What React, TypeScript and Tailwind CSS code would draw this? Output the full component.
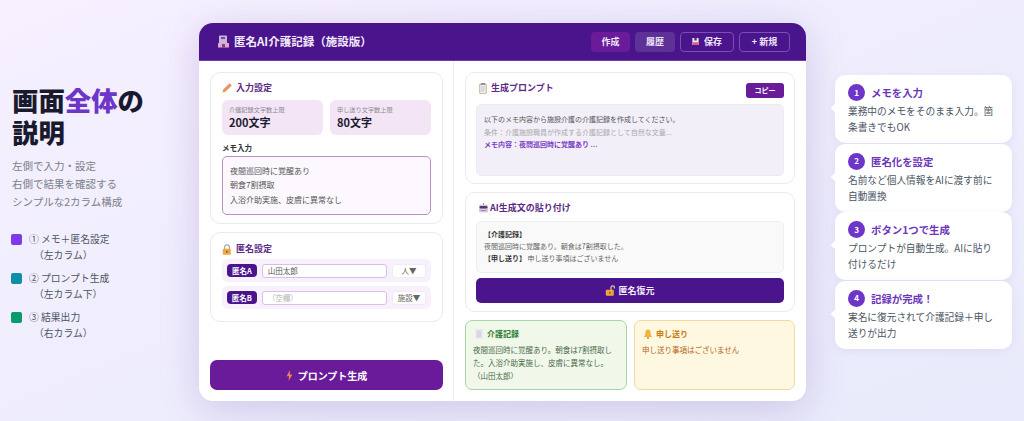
import type { ReactNode } from "react";

const font = { fontFamily: '"Noto Sans CJK JP", "Noto Sans", sans-serif' };

function Building() {
  return (
    <svg width="11" height="13" viewBox="0 0 11 13" className="shrink-0">
      <rect x="1" y="0.5" width="8" height="9" rx="1" fill="#c9b6dc" />
      <rect x="3" y="2" width="4" height="2" fill="#6d4a9a" />
      <rect x="0" y="8" width="11" height="4.5" rx="0.5" fill="#e6a8c8" />
      <rect x="4" y="9" width="3" height="3.5" fill="#7a3f96" />
    </svg>
  );
}

function Pencil() {
  return (
    <svg width="10" height="10" viewBox="0 0 10 10" className="shrink-0">
      <path d="M0.5 9.5 L1.2 6.6 L6.8 1 L9 3.2 L3.4 8.8 Z" fill="#e8955a" />
      <path d="M6.8 1 L7.6 0.4 L9.6 2.4 L9 3.2 Z" fill="#d66a5a" />
    </svg>
  );
}

function Lock({ open }: { open?: boolean }) {
  return (
    <svg width="10" height="11" viewBox="0 0 10 11" className="shrink-0">
      {open ? (
        <path d="M6 5 V2.6 A1.7 1.7 0 0 1 9.4 2.6 V3.6" fill="none" stroke="#e9c9a0" strokeWidth="1.2" />
      ) : (
        <path d="M2.6 5 V3.2 A2.4 2.4 0 0 1 7.4 3.2 V5" fill="none" stroke="#a8a8b0" strokeWidth="1.2" />
      )}
      <rect x="0.8" y="4.8" width="8" height="6" rx="1" fill="#efa73c" />
      <rect x="4.2" y="6.8" width="1.4" height="2" fill="#8a5a1c" />
    </svg>
  );
}

function Clipboard() {
  return (
    <svg width="8" height="11" viewBox="0 0 8 11" className="ml-[3px] shrink-0">
      <rect x="0.3" y="0.8" width="7.4" height="10" rx="0.8" fill="#c2a68a" />
      <rect x="1.2" y="1.8" width="5.6" height="8.2" fill="#eeeef2" />
      <rect x="2" y="0" width="4" height="1.8" fill="#8d8d96" />
      <path d="M2 4 H6 M2 6 H6 M2 8 H5" stroke="#a8a8b4" strokeWidth="0.6" />
    </svg>
  );
}

function Robot() {
  return (
    <svg width="11" height="10" viewBox="0 0 11 10" className="mr-[-3px] ml-[2px] shrink-0">
      <rect x="5" y="0" width="1" height="2" fill="#8d7a9c" />
      <rect x="1" y="1.5" width="9" height="8" rx="1.5" fill="#d9c8dc" />
      <rect x="1.6" y="3" width="7.8" height="2.6" rx="1" fill="#4d3a66" />
      <rect x="3" y="7" width="5" height="1" fill="#a884a8" />
    </svg>
  );
}

function Doc() {
  return (
    <svg width="8" height="10" viewBox="0 0 8 10" className="shrink-0">
      <rect x="0.5" y="0.3" width="7" height="9.4" fill="#e4e2f0" />
      <path d="M2 3 H6 M2 5 H6 M2 7 H6" stroke="#b9b6d0" strokeWidth="0.6" />
    </svg>
  );
}

function Bell() {
  return (
    <svg width="10" height="10" viewBox="0 0 10 10" className="shrink-0">
      <path d="M5 0.5 C3 0.5 2.4 2.2 2.4 4 C2.4 6 1.4 7 0.6 8 H9.4 C8.6 7 7.6 6 7.6 4 C7.6 2.2 7 0.5 5 0.5 Z" fill="#f2b53c" />
      <circle cx="5" cy="9" r="1" fill="#c98a2a" />
    </svg>
  );
}

function Bolt() {
  return (
    <svg width="7" height="11" viewBox="0 0 7 11" className="shrink-0">
      <path d="M4 0 L0.6 6.2 H3 L2.6 11 L6.4 4.6 H3.8 Z" fill="#f0815a" />
    </svg>
  );
}

function Floppy() {
  return (
    <svg width="7" height="9" viewBox="0 0 9 10" className="shrink-0">
      <rect x="0.5" y="0.5" width="8" height="9" fill="#ece6f2" />
      <rect x="3" y="0.5" width="3" height="3.2" fill="#4a3a66" />
      <rect x="1" y="6" width="7" height="3.5" fill="#e2587e" />
    </svg>
  );
}

function Card({ className, children }: { className: string; children: ReactNode }) {
  return <div className={`rounded-[10px] border border-[#ebe8f0] bg-white ${className}`}>{children}</div>;
}

function CardTitle({ icon, children }: { icon: ReactNode; children: ReactNode }) {
  return (
    <div className="flex items-center gap-[4px] text-[9px] leading-[14px] font-bold text-[#5b2a86]">
      {icon}
      <span>{children}</span>
    </div>
  );
}

function Legend({ color, line1, line2 }: { color: string; line1: string; line2: string }) {
  return (
    <div className="flex gap-[7px]">
      <div className={`mt-[3px] h-[11px] w-[11px] shrink-0 rounded-[2px] ${color}`} />
      <div className="text-[9.8px] leading-[16px] text-[#4b5563]">
        <div>{line1}</div>
        <div className="pl-[5px]">{line2}</div>
      </div>
    </div>
  );
}

function Limit({ label, value }: { label: string; value: string }) {
  return (
    <div className="h-[35px] flex-1 rounded-[6px] bg-[#f3e5f5] px-[7px] pt-[5px]">
      <div className="text-[6.2px] leading-[9px] text-[#8b8b95]">{label}</div>
      <div className="text-[11px] leading-[16px] font-bold text-[#1a1a2e]">{value}</div>
    </div>
  );
}

function AnonRow({ tag, value, empty, kind }: { tag: string; value: string; empty?: boolean; kind: string }) {
  return (
    <div className="flex h-[23px] items-center rounded-[6px] bg-[#f9f0fd] pr-[5px] pl-[5px]">
      <div className="flex h-[13px] w-[30px] items-center justify-center rounded-[4px] bg-[#4a148c] text-[7.5px] font-bold text-white">
        {tag}
      </div>
      <div
        className={`ml-[5px] flex h-[14px] w-[126px] items-center rounded-[3px] border-[1.5px] border-[#d9bfe2] bg-white pl-[5px] text-[7.5px] ${
          empty ? "text-[#b5b5bd]" : "text-[#555]"
        }`}
      >
        {value}
      </div>
      <div className="ml-[5px] flex h-[14px] w-[34px] items-center justify-center rounded-[3px] border border-[#f0ebf4] bg-white text-[7.5px] text-[#666]">
        {kind}
      </div>
    </div>
  );
}

function Step({ num, title, body }: { num: number; title: string; body: string }) {
  return (
    <div className="relative h-[68px] rounded-[10px] bg-white pt-[9px] pr-[12px] pl-[13px] shadow-[0_2px_10px_rgba(90,60,170,0.08)]">
      <div className="absolute top-[30px] left-[-3px] h-[6px] w-[6px] rotate-45 bg-white" />
      <div className="flex items-center gap-[6px]">
        <div className="flex h-[17px] w-[17px] items-center justify-center rounded-full bg-[#6d36c9] text-[8px] font-bold text-white">
          {num}
        </div>
        <span className="text-[10.4px] leading-[17px] font-bold text-[#6d36b9]">{title}</span>
      </div>
      <div className="mt-[2px] text-[9.7px] leading-[16px] text-[#4b5563]">{body}</div>
    </div>
  );
}

export default function App() {
  return (
    <div
      className="flex h-[421px] w-[1024px] overflow-hidden bg-gradient-to-br from-[#f6f0ff] to-[#e8ebfb]"
      style={font}
    >
      <div className="w-[199px] shrink-0 pt-[84px] pl-[11px]">
        <h1 className="pl-[1px] text-[26.4px] leading-[32px] font-black text-[#1a1a2e]">
          画面<span className="text-[#6d36c9]">全体</span>の<br />説明
        </h1>
        <div className="mt-[9px] pl-[1px] text-[10.5px] leading-[18px] text-[#7a7f8a]">
          <div>左側で入力・設定</div>
          <div>右側で結果を確認する</div>
          <div>シンプルな2カラム構成</div>
        </div>
        <div className="mt-[20px] flex flex-col gap-[7px]">
          <Legend color="bg-[#7c3aed]" line1="① メモ＋匿名設定" line2="（左カラム）" />
          <Legend color="bg-[#0e8fa8]" line1="② プロンプト生成" line2="（左カラム下）" />
          <Legend color="bg-[#0a9a6c]" line1="③ 結果出力" line2="（右カラム）" />
        </div>
      </div>

      <div className="mt-[23px] flex h-[378px] w-[607px] shrink-0 flex-col overflow-hidden rounded-[14px] bg-white shadow-[0_8px_40px_rgba(74,20,140,0.18)]">
        <div className="flex h-[38px] shrink-0 items-center border-b border-[#6f3aa8] bg-[#4a148c] pr-[16px] pl-[19px]">
          <Building />
          <span className="ml-[5px] text-[11.5px] font-bold text-[#f3eafa]">匿名AI介護記録（施設版）</span>
          <div className="ml-auto flex items-center gap-[5px] text-[9px] font-bold text-[#f0e6f8]">
            <div className="flex h-[20px] w-[39px] items-center justify-center rounded-[4px] bg-[#6a1b9a]">作成</div>
            <div className="flex h-[20px] w-[40px] items-center justify-center rounded-[4px] bg-[#5e3197]">履歴</div>
            <div className="flex h-[20px] w-[54px] items-center justify-center gap-[5px] rounded-[4px] border border-[#7a4fb0]">
              <Floppy />
              保存
            </div>
            <div className="flex h-[20px] w-[51px] items-center justify-center rounded-[4px] border border-[#7a4fb0]">+ 新規</div>
          </div>
        </div>

        <div className="flex min-h-0 flex-1">
          <div className="flex w-[255px] shrink-0 flex-col border-r border-[#efeaf4] pt-[11px] pr-[10px] pb-[11px] pl-[11px]">
            <Card className="h-[152px] px-[11px] pt-[8px]">
              <CardTitle icon={<Pencil />}>入力設定</CardTitle>
              <div className="mt-[5px] flex gap-[7px]">
                <Limit label="介護記録文字数上限" value="200文字" />
                <Limit label="申し送り文字数上限" value="80文字" />
              </div>
              <div className="mt-[7px] text-[7.5px] leading-[11px] font-bold text-[#333]">メモ入力</div>
              <div className="mt-[3px] h-[59px] rounded-[5px] border-[1.5px] border-[#b990c4] bg-[#fdf8ff] px-[7px] pt-[6.5px] text-[8px] leading-[14.5px] text-[#555]">
                <div>夜間巡回時に覚醒あり</div>
                <div>朝食7割摂取</div>
                <div>入浴介助実施、皮膚に異常なし</div>
              </div>
            </Card>
            <Card className="mt-[8px] h-[90px] px-[11px] pt-[9px]">
              <CardTitle icon={<Lock />}>匿名設定</CardTitle>
              <div className="mt-[3px] flex flex-col gap-[4px]">
                <AnonRow tag="匿名A" value="山田太郎" kind="人▼" />
                <AnonRow tag="匿名B" value="（空欄）" empty kind="施設▼" />
              </div>
            </Card>
            <div className="mt-auto flex h-[30px] items-center justify-center gap-[5px] rounded-[7px] bg-[#6a1b9a] text-[10px] font-bold text-white">
              <Bolt />
              プロンプト生成
            </div>
          </div>

          <div className="flex min-w-0 flex-1 flex-col pt-[11px] pr-[11px] pb-[11px] pl-[11px]">
            <Card className="h-[112px] px-[10px] pt-[8px]">
              <div className="flex items-start justify-between">
                <CardTitle icon={<Clipboard />}>生成プロンプト</CardTitle>
                <div className="mt-[2px] flex h-[15px] w-[38px] items-center justify-center rounded-[3px] bg-[#6a1b9a] text-[7px] font-bold text-white">
                  コピー
                </div>
              </div>
              <div className="mt-[6px] h-[72px] rounded-[5px] border border-[#eeeaf4] bg-[#f3eff9] px-[7px] pt-[8px] text-[7px] leading-[12.5px]">
                <div className="text-[#555]">以下のメモ内容から施設介護の介護記録を作成してください。</div>
                <div className="text-[#aaa]">条件：介護施設職員が作成する介護記録として自然な文章...</div>
                <div className="font-bold text-[#7b3fc4]">メモ内容：夜間巡回時に覚醒あり ...</div>
              </div>
            </Card>
            <Card className="mt-[8px] h-[120px] px-[10px] pt-[8px]">
              <CardTitle icon={<Robot />}>AI生成文の貼り付け</CardTitle>
              <div className="mt-[6px] h-[52px] rounded-[5px] border border-[#eeeeee] bg-[#f9f9f9] px-[7px] pt-[6px] text-[7px] leading-[12px] text-[#666]">
                <div className="font-bold text-[#333]">【介護記録】</div>
                <div>夜間巡回時に覚醒あり。朝食は7割摂取した。</div>
                <div>
                  <span className="font-bold text-[#333]">【申し送り】</span> 申し送り事項はございません
                </div>
              </div>
              <div className="mt-[5px] flex h-[25px] items-center justify-center gap-[3px] rounded-[5px] bg-[#4a148c] text-[9px] font-bold text-[#f3eafa]">
                <Lock open />
                匿名復元
              </div>
            </Card>
            <div className="mt-[8px] flex min-h-0 flex-1 gap-[7px]">
              <div className="w-[162px] rounded-[7px] border-[1.5px] border-[#a5d6a7] bg-[#f1f8e9] px-[7px] pt-[6px]">
                <div className="flex items-center gap-[4px] pl-[2px] text-[8px] leading-[14px] font-bold text-[#2e7d32]">
                  <Doc />
                  介護記録
                </div>
                <div className="mt-[2px] text-[7.5px] leading-[13px] text-[#4a6b4c]">
                  夜間巡回時に覚醒あり。朝食は7割摂取した。入浴介助実施し、皮膚に異常なし。（山田太郎）
                </div>
              </div>
              <div className="flex-1 rounded-[7px] border-[1.5px] border-[#f3d9a0] bg-[#fff8e1] px-[7px] pt-[6px]">
                <div className="flex items-center gap-[3px] pl-[1px] text-[8px] leading-[14px] font-bold text-[#c77a12]">
                  <Bell />
                  申し送り
                </div>
                <div className="mt-[2px] text-[7.5px] leading-[13px] text-[#b5651d]">申し送り事項はございません</div>
              </div>
            </div>
          </div>
        </div>
      </div>

      <div className="ml-[29px] flex w-[177px] shrink-0 flex-col gap-[0.5px] pt-[75px]">
        <Step num={1} title="メモを入力" body="業務中のメモをそのまま入力。箇条書きでもOK" />
        <Step num={2} title="匿名化を設定" body="名前など個人情報をAIに渡す前に自動置換" />
        <Step num={3} title="ボタン1つで生成" body="プロンプトが自動生成。AIに貼り付けるだけ" />
        <Step num={4} title="記録が完成！" body="実名に復元されて介護記録＋申し送りが出力" />
      </div>
    </div>
  );
}
